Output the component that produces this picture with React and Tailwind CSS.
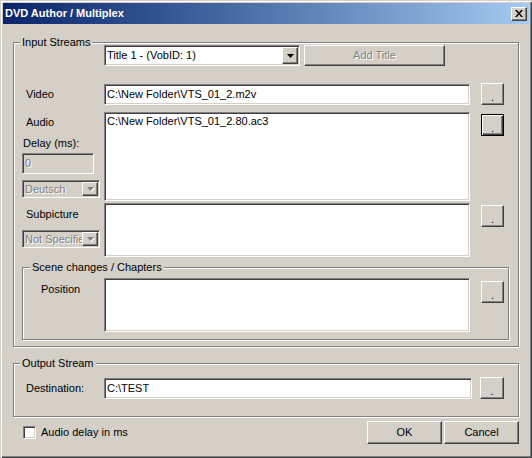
import React from 'react';

const sunken =
  'border border-t-[#808080] border-l-[#808080] border-r-white border-b-white shadow-[inset_1px_1px_0_#404040,inset_-1px_-1px_0_#d4d0c8]';
const raised =
  'border border-t-white border-l-white border-r-[#404040] border-b-[#404040] shadow-[inset_-1px_-1px_0_#808080]';
const greyText = 'text-[#808080] [text-shadow:1px_1px_0_#fff]';

function Arrow({ disabled }) {
  return (
    <svg width="7" height="4" viewBox="0 0 7 4" className={disabled ? 'drop-shadow-[1px_1px_0_#fff]' : ''}>
      <path d="M0 0h7L3.5 4z" fill={disabled ? '#808080' : '#000'} />
    </svg>
  );
}

function Combo({ text, disabled, className }) {
  return (
    <div className={`${sunken} ${disabled ? 'bg-[#d4d0c8]' : 'bg-white'} flex p-[1px] ${className}`}>
      <span className={`flex-1 min-w-0 pl-[1px] flex items-center whitespace-nowrap ${disabled ? greyText : ''}`}>
        {text}
      </span>
      <span className={`w-[16px] shrink-0 ${raised} bg-[#d4d0c8] flex items-center justify-center`}>
        <Arrow disabled={disabled} />
      </span>
    </div>
  );
}

function Field({ text, className }) {
  return <div className={`${sunken} bg-white px-[2px] whitespace-nowrap ${className}`}>{text}</div>;
}

function Browse({ focused, className }) {
  const look = focused
    ? 'border border-black shadow-[inset_1px_1px_0_#fff,inset_-1px_-1px_0_#404040,inset_-2px_-2px_0_#808080]'
    : raised;
  return (
    <button className={`w-[23px] h-[22px] shrink-0 bg-[#d4d0c8] ${look} flex items-center justify-center pt-[6px] ${className}`}>
      .
    </button>
  );
}

function Group({ label, labelPos, className, children }) {
  return (
    <div className={`relative border border-[#808080] shadow-[inset_1px_1px_0_#fff,1px_1px_0_#fff] ${className}`}>
      <span className={`absolute -top-[7px] px-[2px] bg-[#d4d0c8] leading-[13px] ${labelPos}`}>{label}</span>
      {children}
    </div>
  );
}

export default function App() {
  return (
    <div className="w-[532px] h-[458px] bg-[#d4d0c8] p-[3px] text-[11px] leading-[13px] text-black font-['Liberation_Sans',Arial,sans-serif] shadow-[inset_1px_1px_0_#d4d0c8,inset_2px_2px_0_#fff,inset_-1px_-1px_0_#404040,inset_-2px_-2px_0_#808080] flex flex-col">
      {/* Title bar */}
      <div className="h-[21px] shrink-0 flex items-center justify-between pl-[2px] pr-[2px] bg-gradient-to-r from-[#0a246a] to-[#a6caf0]">
        <span className="text-white font-bold">DVD Author / Multiplex</span>
        <button className={`w-[16px] h-[14px] ${raised} bg-[#d4d0c8] flex items-center justify-center`}>
          <svg width="8" height="7" viewBox="0 0 8 7">
            <path d="M0 0h2l2 2.4L6 0h2L5 3.5 8 7H6L4 4.6 2 7H0l3-3.5z" fill="#000" />
          </svg>
        </button>
      </div>

      <div className="pl-[10px] flex flex-col">
        {/* Input Streams */}
        <Group label="Input Streams" labelPos="left-[6px]" className="mt-[18px] w-[506px] h-[305px] pl-[8px] pt-[2px] flex flex-col">
          <div className="flex ml-[82px]">
            <Combo text="Title 1 - (VobID: 1)" className="w-[196px] h-[21px]" />
            <button className={`ml-[4px] w-[141px] h-[21px] ${raised} bg-[#d4d0c8] ${greyText}`}>Add Title</button>
          </div>

          <div className="flex items-start mt-[18px]">
            <div className="w-[82px] h-[21px] flex items-center pl-[4px]">Video</div>
            <Field text="C:\New Folder\VTS_01_2.m2v" className="w-[366px] h-[21px] flex items-center" />
            <Browse className="ml-[11px] -mt-px" />
          </div>

          <div className="flex items-start mt-[7px]">
            <div className="w-[82px] flex flex-col items-start">
              <span className="mt-[4px] pl-[4px]">Audio</span>
              <span className="mt-[8px] pl-[1px]">Delay (ms):</span>
              <div className={`mt-[3px] w-[72px] h-[21px] ${sunken} bg-[#d4d0c8] px-[2px] flex items-center ${greyText}`}>0</div>
              <Combo text="Deutsch" disabled className="mt-[6px] w-[78px] h-[18px]" />
            </div>
            <Field text="C:\New Folder\VTS_01_2.80.ac3" className="w-[366px] h-[89px] pt-[2px]" />
            <Browse focused className="ml-[11px] mt-[2px]" />
          </div>

          <div className="flex items-start mt-[2px]">
            <div className="w-[82px] flex flex-col items-start">
              <span className="mt-[5px] pl-[4px]">Subpicture</span>
              <Combo text="Not Specifie" disabled className="mt-[9px] w-[78px] h-[18px]" />
            </div>
            <Field text="" className="w-[366px] h-[54px]" />
            <Browse className="ml-[11px] mt-[2px]" />
          </div>

          {/* Scene changes */}
          <Group label="Scene changes / Chapters" labelPos="left-[7px]" className="mt-[10px] w-[487px] h-[73px] pt-[10px]">
            <div className="flex items-start">
              <div className="w-[81px] pl-[18px] pt-[5px]">Position</div>
              <Field text="" className="w-[366px] h-[54px]" />
              <Browse className="ml-[11px] mt-[3px]" />
            </div>
          </Group>
        </Group>

        {/* Output Stream */}
        <Group label="Output Stream" labelPos="left-[6px]" className="mt-[16px] w-[506px] h-[54px] pt-[13px]">
          <div className="flex items-start">
            <div className="w-[90px] h-[21px] mt-px pl-[12px] flex items-center">Destination:</div>
            <Field text="C:\TEST" className="w-[368px] h-[21px] mt-px flex items-center" />
            <Browse className="ml-[8px] w-[24px]" />
          </div>
        </Group>

        {/* Bottom row */}
        <div className="mt-[4px] w-[506px] h-[23px] flex items-center">
          <span className={`ml-[10px] w-[13px] h-[13px] bg-white ${sunken}`} />
          <span className="ml-[5px]">Audio delay in ms</span>
          <button className={`ml-auto w-[75px] h-[23px] ${raised} bg-[#d4d0c8]`}>OK</button>
          <button className={`ml-[2px] w-[75px] h-[23px] ${raised} bg-[#d4d0c8]`}>Cancel</button>
        </div>
      </div>
    </div>
  );
}
